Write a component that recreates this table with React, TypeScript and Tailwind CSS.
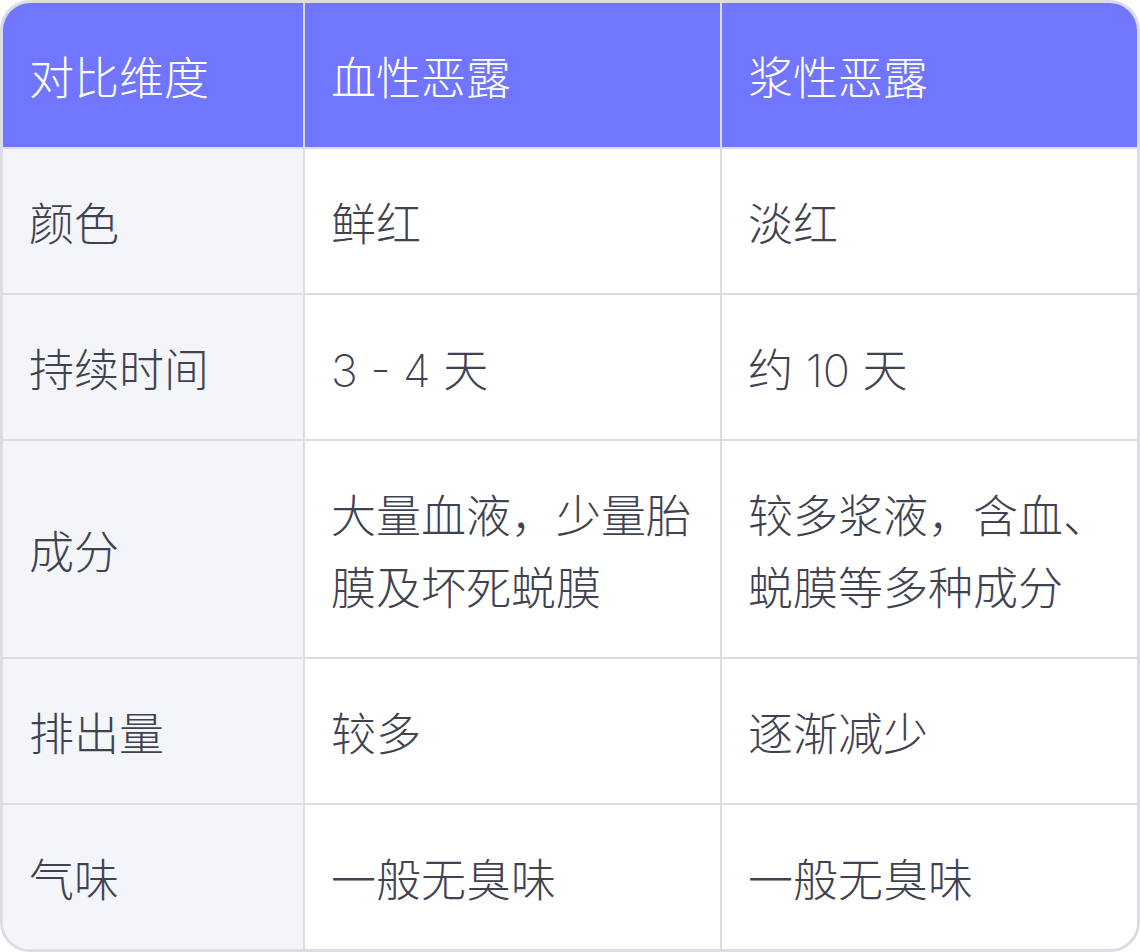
const rows: { label: string; blood: string; serous: string }[] = [
  { label: '颜色', blood: '鲜红', serous: '淡红' },
  { label: '持续时间', blood: '3 - 4 天', serous: '约 10 天' },
  { label: '成分', blood: '大量血液，少量胎膜及坏死蜕膜', serous: '较多浆液，含血、蜕膜等多种成分' },
  { label: '排出量', blood: '较多', serous: '逐渐减少' },
  { label: '气味', blood: '一般无臭味', serous: '一般无臭味' },
]

export default function App() {
  return (
    <div className="w-[1140px] h-[952px] bg-white font-['Inter','Noto_Sans_CJK_SC',sans-serif]">
      <div className="h-full rounded-[30px] border-[3px] border-[#dcdde3] overflow-hidden">
        <div className="grid grid-cols-[302px_417px_1fr] text-[45px] leading-[72px] font-extralight">
          {/* header */}
          <div className="bg-[#7076ff] text-white pl-[26px] pr-[26px] pt-[40px] pb-[32px] border-r-2 border-b-2 border-[#dcdde3]">
            对比维度
          </div>
          <div className="bg-[#7076ff] text-white pl-[26px] pr-[26px] pt-[40px] pb-[32px] border-r-2 border-b-2 border-[#dcdde3]">
            血性恶露
          </div>
          <div className="bg-[#7076ff] text-white pl-[26px] pr-[26px] pt-[40px] pb-[32px] border-b-2 border-[#dcdde3]">
            浆性恶露
          </div>

          {rows.map((row, i) => {
            const last = i === rows.length - 1
            return (
              <div key={row.label} className="contents">
                <div
                  className={`bg-[#f4f5f9] text-[#3f4250] pl-[26px] pr-[26px] pt-[40px] pb-[32px] border-r-2 border-[#dcdde3] flex items-center ${
                    last ? '' : 'border-b-2'
                  }`}
                >
                  {row.label}
                </div>
                <div
                  className={`bg-white text-[#3f4250] pl-[26px] pr-[26px] pt-[40px] pb-[32px] border-r-2 border-[#dcdde3] flex items-center ${
                    last ? '' : 'border-b-2'
                  }`}
                >
                  {row.blood}
                </div>
                <div
                  className={`bg-white text-[#3f4250] pl-[26px] pr-[26px] pt-[40px] pb-[32px] border-[#dcdde3] flex items-center ${
                    last ? '' : 'border-b-2'
                  }`}
                >
                  {row.serous}
                </div>
              </div>
            )
          })}
        </div>
      </div>
    </div>
  )
}
